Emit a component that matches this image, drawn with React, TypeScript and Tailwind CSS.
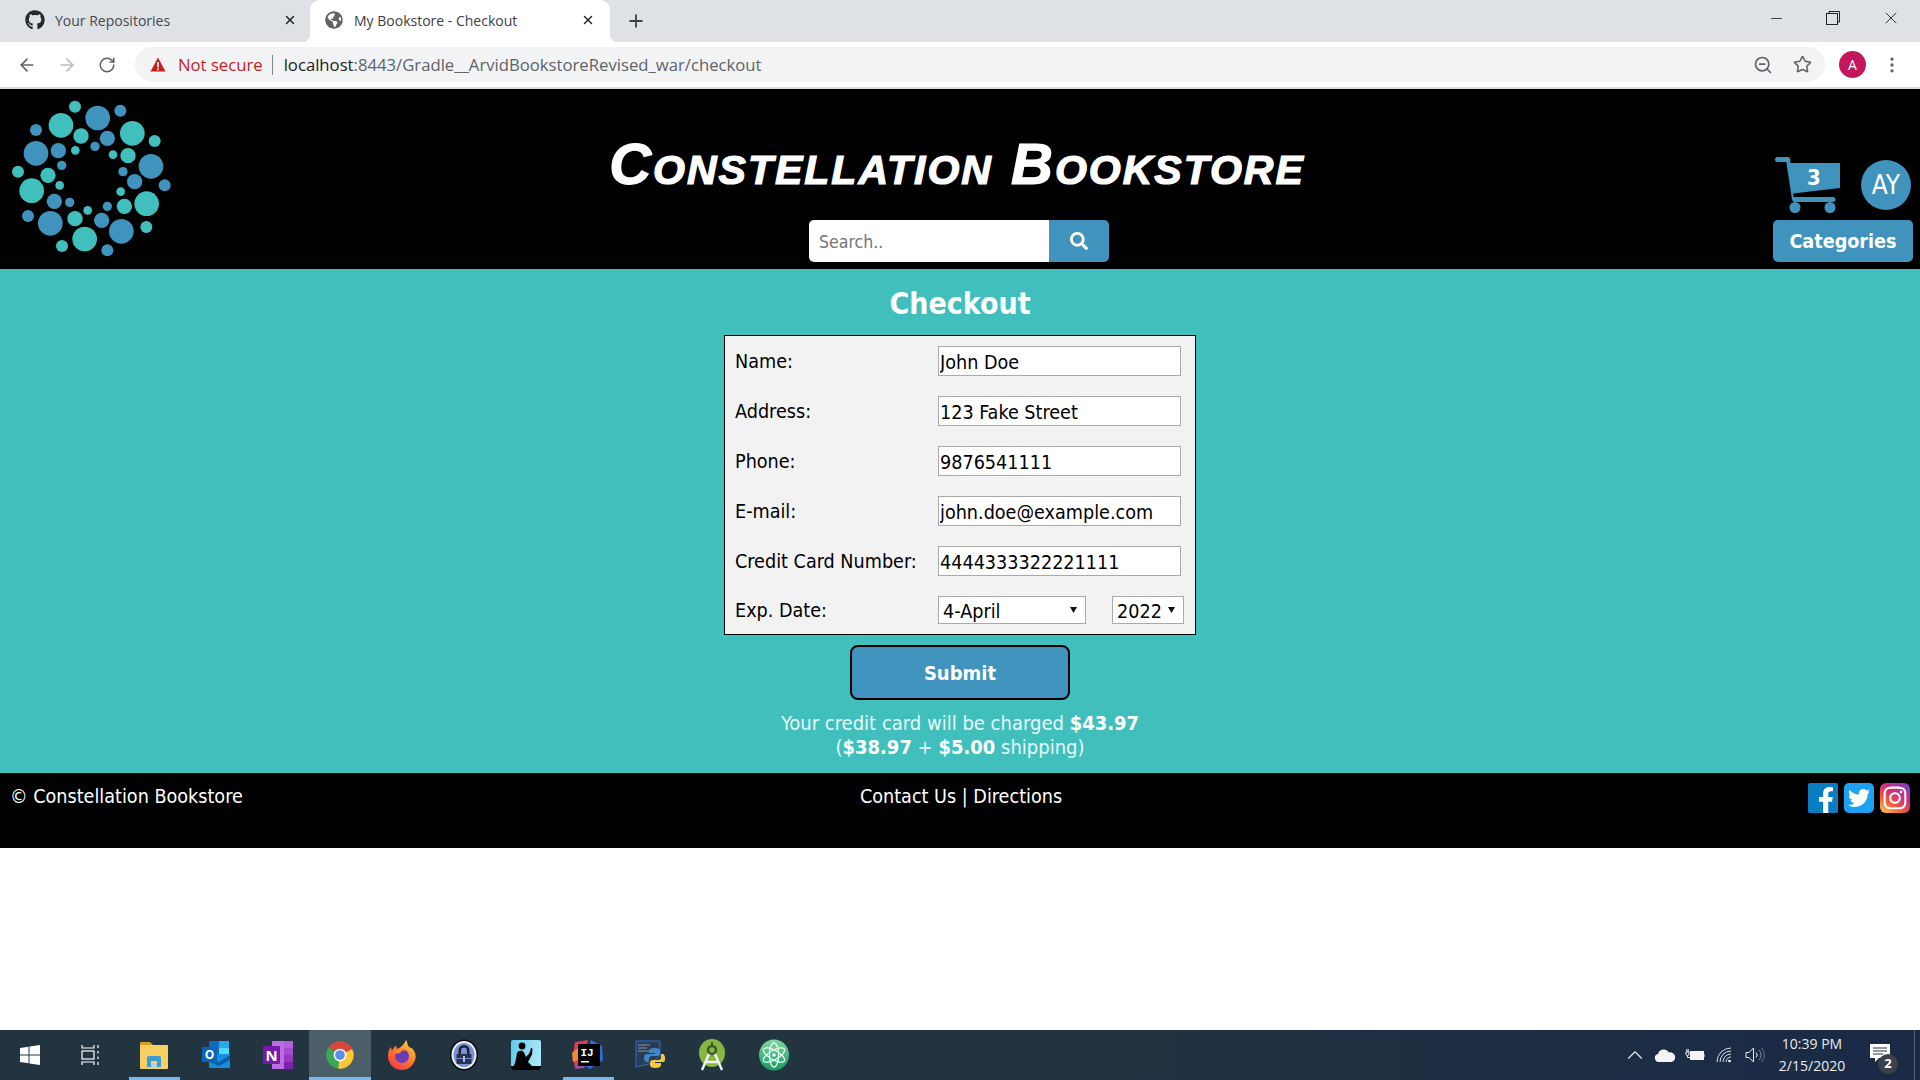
import { ArrowLeft, ArrowRight, ChevronUp, EllipsisVertical, Minus, Plus, RotateCw, Star, X, ZoomOut } from 'lucide-react';
import { FaFacebookF, FaGithub, FaGlobeAmericas, FaInstagram, FaSearch, FaTwitter } from 'react-icons/fa';

const TEAL = '#40bfbd';
const BLUE = '#3f93bd';

// logo dots: [cx, cy, r, teal?]
const DOTS: [number, number, number, number][] = [
    [225, 50, 18, 1], [293, 84, 37, 0], [361, 62, 18, 0], [183, 106, 37, 1], [243, 138, 23, 1], [322, 145, 23, 0],
    [397, 130, 37, 1], [464, 153, 18, 1], [108, 120, 18, 0], [108, 190, 37, 0], [175, 182, 23, 0], [226, 181, 13, 1],
    [285, 169, 14, 0], [339, 194, 13, 1], [384, 197, 23, 1], [453, 229, 37, 0], [185, 226, 14, 0], [54, 245, 18, 1],
    [144, 256, 23, 1], [369, 245, 14, 0], [404, 275, 23, 0], [494, 286, 18, 0], [179, 286, 13, 1], [95, 302, 37, 1],
    [362, 305, 13, 1], [440, 341, 37, 1], [163, 334, 23, 0], [209, 337, 14, 0], [373, 349, 23, 1], [322, 349, 14, 0],
    [263, 361, 13, 1], [84, 378, 18, 0], [225, 386, 23, 1], [305, 391, 23, 0], [151, 400, 37, 0], [364, 424, 37, 0],
    [439, 411, 18, 1], [254, 447, 37, 1], [186, 468, 18, 1], [322, 481, 18, 0],
];

function Logo() {
    return (
        <svg width="190" height="180" viewBox="0 0 570 540">
            {DOTS.map(([cx, cy, r, t]) => (
                <circle key={`${cx}-${cy}`} cx={cx} cy={cy} r={r} fill={t ? TEAL : BLUE} />
            ))}
        </svg>
    );
}

function Cart() {
    return (
        <div className="relative w-[66px] h-[55px]">
            <svg width="66" height="56" viewBox="0 0 66 56" fill={BLUE}>
                <path d="M2.5 0H13a2 2 0 0 1 2 1.6L15.6 6H65V31L18 36.5L18.7 40H58a2.5 2.5 0 0 1 0 5H20a3 3 0 0 1-3-2.5L11.3 5H2.5a2.5 2.5 0 0 1 0-5Z" />
                <circle cx="20" cy="50.5" r="5.5" />
                <circle cx="55" cy="50.5" r="5.5" />
            </svg>
            <span className="absolute left-[29px] top-[6px] w-[20px] text-center text-[22px] leading-[30px] font-bold text-white">3</span>
        </div>
    );
}

function Field({ label, value }: { label: string; value: string }) {
    return (
        <div className="flex items-center h-[30px] mb-[20px]">
            <label className="w-[203px] pt-[2px] text-[19.6px] text-black">{label}</label>
            <input
                readOnly
                value={value}
                className="w-[243px] h-[30px] bg-white border border-[#aaaaaa] px-[1px] pt-[2px] text-[19.6px] text-black outline-none"
            />
        </div>
    );
}

function ExpSelect({ value, className }: { value: string; className: string }) {
    return (
        <div className={`relative h-[28px] ${className}`}>
            <select defaultValue={value} className="appearance-none w-full h-full bg-white border border-[#aaaaaa] pl-[4px] text-[19.6px] text-black">
                <option>{value}</option>
            </select>
            <svg width="7" height="6" viewBox="0 0 7 6" className="absolute right-[9px] top-[11px] pointer-events-none">
                <path d="M0 0H7L3.5 6Z" fill="#111" />
            </svg>
        </div>
    );
}

/* taskbar icons */
function Explorer() {
    return (
        <svg width="30" height="30" viewBox="0 0 30 30">
            <path d="M1 3a1 1 0 0 1 1-1h9l3 3v3H1Z" fill="#d99f22" />
            <rect x="1" y="5" width="28" height="24" rx="1" fill="#f7cf63" />
            <path d="M8 27V18a2 2 0 0 1 2-2h10a2 2 0 0 1 2 2v9h-4v-6h-6v6Z" fill="#3f9ad8" />
            <rect x="12" y="23" width="6" height="5" fill="#a9d6f0" />
        </svg>
    );
}

function Outlook() {
    return (
        <svg width="30" height="30" viewBox="0 0 30 30">
            <rect x="8" y="1" width="20" height="13" fill="#0f6cbd" />
            <rect x="18" y="1" width="10" height="7" fill="#28a8ea" />
            <rect x="18" y="8" width="10" height="7" fill="#50d9ff" />
            <path d="M8 14h21v13a1 1 0 0 1-1 1H9a1 1 0 0 1-1-1Z" fill="#1490df" />
            <path d="M8 15l10 7 11-7v5l-11 6-10-4Z" fill="#0a5fa8" />
            <rect x="1" y="7" width="15" height="15" rx="1" fill="#0a64b8" />
            <text x="8.5" y="19" textAnchor="middle" fontSize="12" fontWeight="700" fill="#fff" fontFamily="Open Sans, sans-serif">O</text>
        </svg>
    );
}

function OneNote() {
    return (
        <svg width="30" height="30" viewBox="0 0 30 30">
            <rect x="9" y="1" width="21" height="28" rx="1" fill="#ba6fe0" />
            <rect x="21" y="1" width="9" height="7" fill="#b45fdc" />
            <rect x="21" y="8" width="9" height="7" fill="#a54bd0" />
            <rect x="21" y="15" width="9" height="7" fill="#9a36c4" />
            <rect x="21" y="22" width="9" height="7" fill="#7f1fab" />
            <rect x="0" y="6" width="17" height="18" rx="1" fill="#7719aa" />
            <text x="8.5" y="21" textAnchor="middle" fontSize="15" fontWeight="700" fill="#fff" fontFamily="Open Sans, sans-serif">N</text>
        </svg>
    );
}

function Chrome() {
    return (
        <svg width="30" height="30" viewBox="0 0 32 32">
            <path d="M16 16L29 9.5A14.5 14.5 0 0 0 4 7.5Z" fill="#d9483b" />
            <path d="M16 16L4 7.5A14.5 14.5 0 0 0 14 30.4Z" fill="#3aa757" />
            <path d="M16 16L14 30.4A14.5 14.5 0 0 0 29 9.5Z" fill="#fcc934" />
            <circle cx="16" cy="16" r="6.8" fill="#fff" />
            <circle cx="16" cy="16" r="5.2" fill="#5a8fe8" />
        </svg>
    );
}

function Firefox() {
    return (
        <svg width="30" height="32" viewBox="0 0 30 32">
            <defs>
                <linearGradient id="fx" x1="0.8" y1="0" x2="0.2" y2="1">
                    <stop offset="0" stopColor="#ffd23c" />
                    <stop offset="0.5" stopColor="#ff7a2a" />
                    <stop offset="1" stopColor="#f0344f" />
                </linearGradient>
            </defs>
            <path d="M19 1c2 3 1 5 3 7 2 1 4 1 5 4 2 3 2 6 1 9-2 6-7 10-13 10C7 31 1 25 1 17c0-4 1-7 3-9l1 4c1-3 3-5 5-5-1 1-1 2 0 3 3-1 7-4 9-9Z" fill="url(#fx)" />
            <circle cx="15" cy="17" r="7" fill="#6b3bb8" />
            <path d="M8 12c3-3 9-3 11 0-3-1-5 0-6 2l-5 1Z" fill="#ff8a2a" />
        </svg>
    );
}

function KeePass() {
    return (
        <svg width="30" height="32" viewBox="0 0 30 32">
            <ellipse cx="15" cy="16" rx="14" ry="15.5" fill="#0a0a0a" />
            <ellipse cx="15" cy="16" rx="12.5" ry="14" fill="#e9eef8" />
            <ellipse cx="15" cy="16" rx="10.5" ry="12" fill="#7a93cf" />
            <path d="M9.5 15v-3.5a5.5 5.5 0 0 1 11 0V15h-2.5v-3.5a3 3 0 0 0-6 0V15Z" fill="#1a1f33" />
            <rect x="7.5" y="15" width="15" height="10" rx="1" fill="#283250" />
            <rect x="7.5" y="19" width="15" height="1" fill="#7a93cf" />
            <rect x="14" y="17" width="2" height="6" fill="#a5bbe6" />
        </svg>
    );
}

function Kindle() {
    return (
        <svg width="30" height="30" viewBox="0 0 30 30">
            <defs>
                <linearGradient id="kd" x1="0" y1="0" x2="1" y2="0.2">
                    <stop offset="0" stopColor="#5fcbea" />
                    <stop offset="1" stopColor="#a8e6f8" />
                </linearGradient>
            </defs>
            <rect width="30" height="30" rx="2" fill="url(#kd)" />
            <circle cx="11" cy="6" r="3.4" fill="#000" />
            <path d="M6 13c1-3 6-3 7-.5l2 4.5 3.5-4 1.5-5 1.5.5-.5 6-4 7.5 5 5H2c2-2 3-8 4-14Z" fill="#000" />
            <path d="M0 26h30v2a2 2 0 0 1-2 2H2a2 2 0 0 1-2-2Z" fill="#000" />
        </svg>
    );
}

function Intellij() {
    return (
        <svg width="32" height="32" viewBox="0 0 32 32">
            <path d="M3 3l13-2-3 14-10 15-2-14Z" fill="#e3375c" />
            <path d="M0 14l6-5v12l-5 2Z" fill="#f38a2f" />
            <path d="M3 30l4-12h10l-5 11Z" fill="#a04f9d" />
            <path d="M19 1l11 6 1 14-13 9-7-4Z" fill="#2a6fe0" />
            <rect x="6" y="5" width="22" height="22" fill="#000" />
            <text x="8.5" y="17" fontSize="11" fontWeight="700" fill="#fff" fontFamily="Liberation Mono, monospace">IJ</text>
            <rect x="9" y="22" width="8" height="1.5" fill="#fff" />
        </svg>
    );
}

function PythonIde() {
    return (
        <svg width="30" height="30" viewBox="0 0 30 30">
            <path d="M1 1h24v15L14 24l-13 3Z" fill="#2b3d55" stroke="#2a6fd0" strokeWidth="1" />
            <path d="M3 5h12M3 8h9M3 11h14" stroke="#8a97a8" strokeWidth="1" />
            <path d="M20 8c-4 0-6 1-6 3v2h6v1h-8c-2 0-3 2-3 4s1 4 3 4h2v-3c0-2 1-3 3-3h5c2 0 3-1 3-3v-2c0-2-2-3-5-3Z" fill="#3f88c5" />
            <path d="M20 28c4 0 6-1 6-3v-2h-6v-1h8c2 0 2-2 2-4s-1-4-2-4h-2v3c0 2-1 3-3 3h-5c-2 0-3 1-3 3v2c0 2 2 3 5 3Z" fill="#f7c93e" />
        </svg>
    );
}

function AndroidStudio() {
    return (
        <svg width="30" height="32" viewBox="0 0 30 32">
            <ellipse cx="15" cy="14" rx="13" ry="14" fill="#86b743" />
            <circle cx="15" cy="11" r="4" fill="none" stroke="#3a5a2a" strokeWidth="2.5" />
            <path d="M15 3v4" stroke="#3a5a2a" strokeWidth="2" />
            <path d="M12 15L5 31M18 15l7 16M9 23h12" stroke="#f0f2ee" strokeWidth="2.5" fill="none" />
        </svg>
    );
}

function Atom() {
    return (
        <svg width="30" height="32" viewBox="0 0 30 32">
            <defs>
                <linearGradient id="at" x1="0" y1="0" x2="0" y2="1">
                    <stop offset="0" stopColor="#7fd6a0" />
                    <stop offset="1" stopColor="#169a62" />
                </linearGradient>
            </defs>
            <ellipse cx="15" cy="16" rx="15" ry="15.5" fill="url(#at)" />
            <g fill="none" stroke="#eafff3" strokeWidth="1.3">
                <ellipse cx="15" cy="16" rx="12" ry="4.6" transform="rotate(30 15 16)" />
                <ellipse cx="15" cy="16" rx="12" ry="4.6" transform="rotate(-30 15 16)" />
                <ellipse cx="15" cy="16" rx="12" ry="4.6" transform="rotate(90 15 16)" />
            </g>
            <circle cx="15" cy="16" r="1.8" fill="#eafff3" />
        </svg>
    );
}

const TASK_ITEMS = [
    { icon: <Explorer />, open: true },
    { icon: <Outlook /> },
    { icon: <OneNote /> },
    { icon: <Chrome />, active: true },
    { icon: <Firefox /> },
    { icon: <KeePass /> },
    { icon: <Kindle /> },
    { icon: <Intellij />, open: true },
    { icon: <PythonIde /> },
    { icon: <AndroidStudio /> },
    { icon: <Atom /> },
];

export default function App() {
    return (
        <div className="h-screen flex flex-col overflow-hidden bg-white font-['DejaVu_Sans',sans-serif] [font-stretch:condensed]">
            {/* chrome: tabs */}
            <div className="h-[42px] shrink-0 flex bg-[#dee1e6] font-['Open_Sans',sans-serif] [font-stretch:normal] text-[14px] text-[#45494d] pl-[10px]">
                <div className="w-[300px] flex items-center pl-[15px] pb-[2px]">
                    <FaGithub className="w-[20px] h-[20px] text-[#24292e]" />
                    <span className="ml-[10px] flex-1">Your Repositories</span>
                    <X className="w-[14px] h-[14px] mr-[13px] text-[#222]" strokeWidth={2.5} />
                </div>
                <div className="relative w-[300px] flex items-center pl-[14px] pb-[2px] bg-white rounded-t-[10px] text-[#3c4043]">
                    <span className="absolute -left-[8px] bottom-0 w-[8px] h-[8px] bg-[radial-gradient(circle_at_0_0,transparent_8px,white_8.5px)]" />
                    <span className="absolute -right-[8px] bottom-0 w-[8px] h-[8px] bg-[radial-gradient(circle_at_100%_0,transparent_8px,white_8.5px)]" />
                    <FaGlobeAmericas className="w-[18px] h-[18px] text-[#5f6368] ml-[1px]" />
                    <span className="ml-[11px] flex-1">My Bookstore - Checkout</span>
                    <X className="w-[14px] h-[14px] mr-[15px] text-[#222]" strokeWidth={2.5} />
                </div>
                <div className="flex items-center ml-[16px]">
                    <Plus className="w-[20px] h-[20px] text-[#3c4043]" strokeWidth={2.2} />
                </div>
                <div className="ml-auto flex items-start text-[#222]">
                    <div className="w-[46px] h-[36px] flex items-center justify-center"><Minus className="w-[17px] h-[17px]" strokeWidth={1.2} /></div>
                    <div className="w-[66px] h-[36px] flex items-center justify-center pl-[2px]">
                        <svg width="14" height="14" viewBox="0 0 14 14" fill="none" stroke="#222" strokeWidth="1">
                            <rect x="0.5" y="2.5" width="11" height="11" />
                            <path d="M3 2.5V0.5H13.5V11H11.5" />
                        </svg>
                    </div>
                    <div className="w-[52px] mr-[3px] h-[36px] flex items-center justify-center"><X className="w-[20px] h-[20px]" strokeWidth={1.1} /></div>
                </div>
            </div>

            {/* chrome: address bar */}
            <div className="h-[47px] shrink-0 flex items-start pt-[5px] bg-white border-b-2 border-[#dadce0] font-['Open_Sans',sans-serif] [font-stretch:normal]">
                <div className="w-[135px] h-[35px] flex items-center text-[#5f6368] pl-[17px] gap-[20px]">
                    <ArrowLeft className="w-[20px] h-[20px]" />
                    <ArrowRight className="w-[20px] h-[20px] text-[#b8babd]" />
                    <RotateCw className="w-[18px] h-[18px] ml-[1px]" />
                </div>
                <div className="w-[1690px] h-[35px] rounded-full bg-[#f1f3f4] flex items-center pl-[15px] text-[16.7px]">
                    <svg width="16" height="15" viewBox="0 0 16 15">
                        <path d="M8 0.5L15.5 14.5H0.5Z" fill="#c5221f" />
                        <rect x="7.2" y="5" width="1.6" height="5.5" fill="#fff" />
                        <rect x="7.2" y="11.5" width="1.6" height="1.7" fill="#fff" />
                    </svg>
                    <span className="ml-[12px] text-[#c5221f]">Not secure</span>
                    <span className="ml-[9px] w-px h-[20px] bg-[#80868b]" />
                    <span className="ml-[11px] text-[#5f6368]"><span className="text-[#202124]">localhost</span>:8443/Gradle__ArvidBookstoreRevised_war/checkout</span>
                    <div className="ml-auto flex items-center mr-[13px] gap-[20px] text-[#5f6368]">
                        <ZoomOut className="w-[20px] h-[20px]" />
                        <Star className="w-[19px] h-[19px]" />
                    </div>
                </div>
                <div className="flex-1 h-[35px] flex items-center">
                    <div className="ml-[14px] w-[27px] h-[27px] rounded-full bg-[#c2185b] text-white text-[14px] flex items-center justify-center">A</div>
                    <EllipsisVertical className="ml-[16px] w-[20px] h-[20px] text-[#5f6368]" />
                </div>
            </div>

            {/* site header */}
            <header className="h-[180px] shrink-0 bg-black grid grid-cols-3">
                <div className="overflow-hidden h-[180px]">
                    <div className="mt-[1px]"><Logo /></div>
                </div>
                <div className="flex flex-col items-center pt-[44px]">
                    <h1 className="h-[62px] whitespace-nowrap font-['Liberation_Sans',sans-serif] [font-stretch:normal] italic font-bold [font-variant:small-caps] [-webkit-text-stroke:1.2px_white] text-[58px] leading-[62px] tracking-[2px] text-white -translate-x-[3px]">
                        Constellation Bookstore
                    </h1>
                    <div className="mt-[25px] -ml-[2px] w-[300px] h-[42px] flex rounded-[5px] overflow-hidden">
                        <input placeholder="Search.." className="flex-1 min-w-0 bg-white pl-[10px] pt-[2px] text-[17.6px] outline-none placeholder:text-[#757575]" />
                        <button className="w-[60px] flex items-center justify-center text-white bg-[#3f93bd]">
                            <FaSearch className="w-[18px] h-[18px]" />
                        </button>
                    </div>
                </div>
                <div className="flex flex-col items-end justify-end pb-[7px] pr-[7px]">
                    <div className="flex items-center pr-[2px] mb-[8px]">
                        <Cart />
                        <div className="ml-[20px] w-[50px] h-[50px] pt-[2px] rounded-full bg-[#3f93bd] text-white text-[26px] flex items-center justify-center">AY</div>
                    </div>
                    <div className="w-[140px] h-[42px] pt-[1px] rounded-[5px] bg-[#3f93bd] text-white font-bold text-[19.6px] flex items-center justify-center">Categories</div>
                </div>
            </header>

            {/* checkout */}
            <main className="h-[504px] shrink-0 bg-[#40bfbd] flex flex-col items-center pt-[15px]">
                <h2 className="h-[40px] text-[30px] leading-[40px] font-bold text-white">Checkout</h2>
                <form className="mt-[11px] w-[472px] h-[300px] bg-[#f2f2f2] border border-black pl-[10px] pt-[10px]">
                    <Field label="Name:" value="John Doe" />
                    <Field label="Address:" value="123 Fake Street" />
                    <Field label="Phone:" value="9876541111" />
                    <Field label="E-mail:" value="john.doe@example.com" />
                    <Field label="Credit Card Number:" value="4444333322221111" />
                    <div className="flex items-center h-[28px]">
                        <label className="w-[203px] pt-[2px] text-[19.6px] text-black">Exp. Date:</label>
                        <ExpSelect value="4-April" className="w-[148px]" />
                        <ExpSelect value="2022" className="ml-[26px] w-[72px]" />
                    </div>
                </form>
                <button className="mt-[10px] w-[220px] h-[55px] pt-[1px] rounded-[8px] border-2 border-black bg-[#3f93bd] text-white font-bold text-[20px]">Submit</button>
                <p className="mt-[11px] text-center text-[20px] leading-[24px] text-[#e6fbfa]">
                    Your credit card will be charged <b className="text-white">$43.97</b>
                    <br />
                    (<b className="text-white">$38.97</b> + <b className="text-white">$5.00</b> shipping)
                </p>
            </main>

            {/* site footer */}
            <footer className="h-[75px] shrink-0 bg-black text-white text-[19.6px] leading-[24px] grid grid-cols-3 pt-[12px]">
                <div className="pl-[10px]">© Constellation Bookstore</div>
                <div className="text-center pl-[2px]">Contact Us | Directions</div>
                <div className="flex justify-end gap-[6px] pr-[10px] -mt-[2px]">
                    <div className="w-[30px] h-[30px] rounded-[2px] bg-[#0a7cc2] flex items-end justify-center overflow-hidden">
                        <FaFacebookF className="w-[24px] h-[26px] ml-[6px]" />
                    </div>
                    <div className="w-[30px] h-[30px] rounded-[5px] bg-[#1da1f2] flex items-center justify-center">
                        <FaTwitter className="w-[22px] h-[22px]" />
                    </div>
                    <div className="w-[30px] h-[30px] rounded-[6px] bg-[linear-gradient(35deg,#fdc14f_5%,#f0553a_35%,#d12d7f_60%,#7a3ec0_95%)] flex items-center justify-center">
                        <FaInstagram className="w-[26px] h-[26px]" />
                    </div>
                </div>
            </footer>

            <div className="flex-1" />

            {/* windows taskbar */}
            <div className="h-[50px] shrink-0 flex bg-[linear-gradient(90deg,#22343f_0%,#22343f_50%,#1a2a47_100%)] text-[#e8ecef] font-['Open_Sans',sans-serif] [font-stretch:normal]">
                <div className="w-[60px] flex items-center justify-center">
                    <svg width="20" height="20" viewBox="0 0 20 20" fill="#fff">
                        <path d="M0 3l8.5-1.2V9.5H0ZM9.5 1.6L20 0v9.5H9.5ZM0 10.5h8.5v7.7L0 17ZM9.5 10.5H20V20L9.5 18.4Z" />
                    </svg>
                </div>
                <div className="w-[63px] flex items-center justify-center pr-[2px]">
                    <svg width="20" height="20" viewBox="0 0 20 20" fill="none" stroke="#fff" strokeWidth="1.2">
                        <rect x="1" y="6" width="12" height="8" />
                        <path d="M1 0v3h12V0M1 20v-3h12v3M17 0v3M17 6v2.5M17 11.5V14M17 17v3" />
                    </svg>
                </div>
                {TASK_ITEMS.map((item, i) => (
                    <div key={i} className={`relative w-[62px] flex items-center justify-center ${item.active ? 'bg-[#4b5f68]' : ''}`}>
                        {item.icon}
                        {item.open && <span className="absolute bottom-0 left-[6px] right-[5px] h-[3px] bg-[#76b9ed]" />}
                        {item.active && <span className="absolute bottom-0 left-0 right-0 h-[3px] bg-[#76b9ed]" />}
                    </div>
                ))}
                <div className="ml-auto flex items-center h-full">
                    <div className="w-[30px] flex justify-center"><ChevronUp className="w-[26px] h-[26px]" strokeWidth={1} /></div>
                    <div className="w-[30px] flex justify-center">
                        <svg width="22" height="13" viewBox="0 0 22 13" fill="#f2f4f6">
                            <path d="M5 13a4 4 0 0 1-1-7.9A6 6 0 0 1 15 3.5 4.8 4.8 0 0 1 17.5 13Z" />
                        </svg>
                    </div>
                    <div className="w-[30px] flex justify-center">
                        <svg width="20" height="14" viewBox="0 0 20 14" fill="none" stroke="#f2f4f6" strokeWidth="1">
                            <rect x="5.5" y="3.5" width="13" height="8" />
                            <rect x="6.5" y="4.5" width="11" height="6" fill="#f2f4f6" />
                            <path d="M19 6v3" />
                            <path d="M1 4h3v2a1.5 1.5 0 0 1-3 0ZM1.8 1v3M3.2 1v3M2.5 7.5v2h3" />
                        </svg>
                    </div>
                    <div className="w-[30px] flex justify-center">
                        <svg width="18" height="16" viewBox="0 0 18 16" fill="none" stroke="#d8dde2" strokeWidth="1">
                            <path d="M1 15A14 14 0 0 1 15 1M4 15A11 11 0 0 1 15 4M7 15a8 8 0 0 1 8-8M10 15a5 5 0 0 1 5-5" />
                            <circle cx="13.5" cy="14" r="1.3" fill="#fff" stroke="none" />
                        </svg>
                    </div>
                    <div className="w-[30px] flex justify-center">
                        <svg width="20" height="16" viewBox="0 0 20 16" fill="none" stroke="#e8ecef" strokeWidth="1">
                            <path d="M1 5.5h3L8.5 1v14L4 10.5H1Z" />
                            <path d="M11 5.5a3.5 3.5 0 0 1 0 5" />
                            <path d="M14 3a7 7 0 0 1 0 10" stroke="#8794a4" />
                            <path d="M16.5 1a10 10 0 0 1 0 14" stroke="#66748a" />
                        </svg>
                    </div>
                    <div className="w-[84px] text-center text-[14px] leading-[22px]">
                        <div>10:39 PM</div>
                        <div>2/15/2020</div>
                    </div>
                    <div className="relative w-[48px] h-full flex items-center justify-center">
                        <svg width="20" height="18" viewBox="0 0 20 18" className="-mt-[5px] ml-[3px]">
                            <path d="M0 0h20v14H9l-4 4v-4H0Z" fill="#fff" />
                            <path d="M3 4h14M3 7h14M3 10h10" stroke="#22303f" strokeWidth="1" />
                        </svg>
                        <span className="absolute left-[24px] top-[24px] w-[20px] h-[20px] rounded-full bg-[#3c4148] text-white text-[13px] font-bold flex items-center justify-center">2</span>
                    </div>
                    <div className="ml-[12px] w-px h-full bg-[#57626f] mr-[5px]" />
                </div>
            </div>
        </div>
    );
}
